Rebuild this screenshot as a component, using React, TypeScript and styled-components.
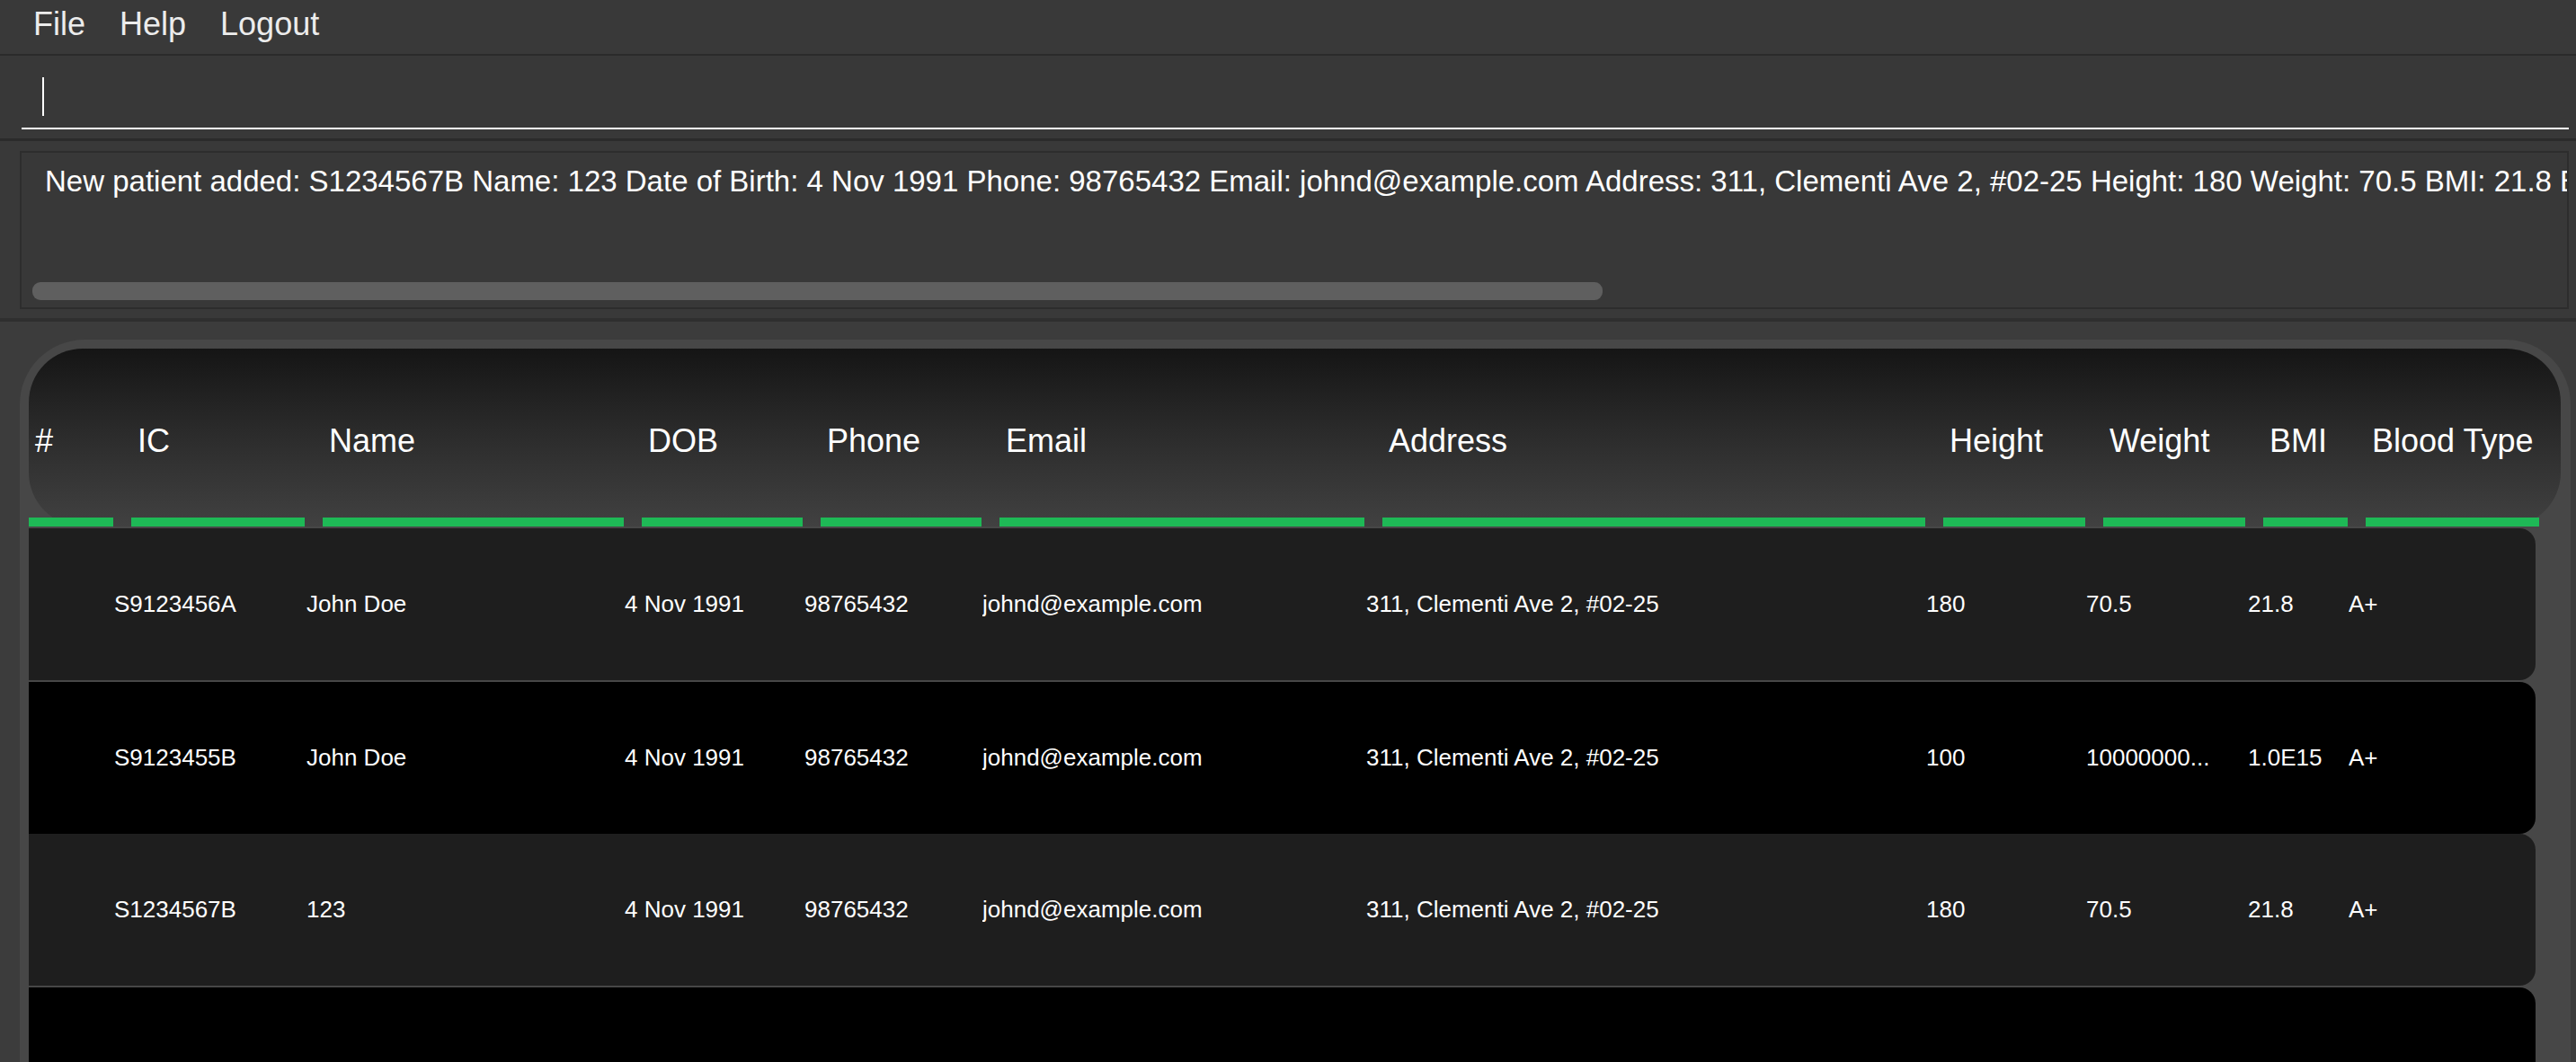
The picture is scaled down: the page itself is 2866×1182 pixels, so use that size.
import React from "react";
import styled, { createGlobalStyle } from "styled-components";

const GlobalStyle = createGlobalStyle`
  html, body {
    margin: 0;
    padding: 0;
    background: #3a3a3a;
  }
  body {
    width: 2866px;
    height: 1182px;
    overflow: hidden;
    font-family: "Liberation Sans", Arial, sans-serif;
  }
`;

const Window = styled.div`
  width: 2866px;
  height: 1182px;
  display: flex;
  flex-direction: column;
  background: #3a3a3a;
  overflow: hidden;
`;

const MenuBar = styled.div`
  flex: none;
  height: 60px;
  display: flex;
  align-items: flex-start;
  padding-left: 18px;
  background: #393939;
  border-bottom: 2px solid #2b2b2b;
`;

const MenuItem = styled.div`
  padding: 6px 19px 0;
  font-size: 36px;
  line-height: 41px;
  color: #ececec;
`;

const CommandSection = styled.div`
  flex: none;
  height: 92px;
  display: flex;
  padding: 0 8px 0 24px;
  background: #383838;
  border-bottom: 3px solid #2b2b2b;
`;

const CommandField = styled.div`
  flex: 1;
  height: 80px;
  display: flex;
  align-items: flex-start;
  border-bottom: 2px solid #ffffff;
`;

const Caret = styled.div`
  width: 2px;
  height: 43px;
  margin: 24px 0 0 23px;
  background: #ffffff;
`;

const ResultSection = styled.div`
  flex: none;
  height: 201px;
  box-sizing: border-box;
  padding: 11px 8px 10px 22px;
  display: flex;
  background: #393939;
  border-bottom: 4px solid #2f2f2f;
`;

const ResultBox = styled.div`
  flex: 1;
  display: flex;
  flex-direction: column;
  overflow: hidden;
  background: #383838;
  border: 2px solid #2d2d2d;
`;

const ResultText = styled.div`
  padding: 13px 0 0 26px;
  font-size: 33px;
  line-height: 37px;
  color: #ffffff;
  white-space: nowrap;
`;

const ScrollThumb = styled.div`
  width: 1747px;
  height: 20px;
  margin: auto 0 8px 12px;
  border-radius: 9px;
  background: #5f5f5f;
`;

const ListSection = styled.div`
  flex: 1;
  min-height: 0;
  display: flex;
  padding: 20px 6px 0 22px;
  background: #3c3c3c;
`;

const ListPanel = styled.div`
  flex: 1;
  display: flex;
  flex-direction: column;
  padding: 10px 11px 0 10px;
  background: #474747;
  border-radius: 72px 72px 0 0;
  overflow: hidden;
`;

const headerCols = "114px 213px 355px 199px 199px 426px 624px 178px 178px 114px 213px";
const rowCols = "95px 214px 354px 200px 198px 427px 623px 178px 180px 112px 1fr";

const Header = styled.div`
  flex: none;
  height: 198px;
  display: grid;
  grid-template-columns: ${headerCols};
  border-radius: 60px;
  background: linear-gradient(180deg, #151515 0%, #2a2a2a 45%, #414141 100%);
`;

const HeaderCell = styled.div`
  display: flex;
  flex-direction: column;
`;

const HeaderLabel = styled.div`
  flex: 1;
  display: flex;
  align-items: center;
  padding: 18px 0 0 7px;
  font-size: 36px;
  color: #ffffff;
  white-space: nowrap;
`;

const HeaderBar = styled.div`
  height: 10px;
  margin-right: 20px;
  background: #1eb956;
`;

const Rows = styled.div`
  display: flex;
  flex-direction: column;
  margin-top: 2px;
  padding-right: 28px;
`;

const Row = styled.div<{ $dark: boolean }>`
  flex: none;
  height: 169px;
  display: grid;
  grid-template-columns: ${rowCols};
  align-items: center;
  margin-bottom: ${(p) => (p.$dark ? "0" : "2px")};
  border-radius: 0 18px 18px 0;
  background: ${(p) => (p.$dark ? "#000000" : "#1e1e1e")};
`;

const Cell = styled.div`
  font-size: 26px;
  color: #ffffff;
  white-space: nowrap;
  overflow: hidden;
`;

const headers = ["#", "IC", "Name", "DOB", "Phone", "Email", "Address", "Height", "Weight", "BMI", "Blood Type"];

const patients = [
  ["", "S9123456A", "John Doe", "4 Nov 1991", "98765432", "johnd@example.com", "311, Clementi Ave 2, #02-25", "180", "70.5", "21.8", "A+"],
  ["", "S9123455B", "John Doe", "4 Nov 1991", "98765432", "johnd@example.com", "311, Clementi Ave 2, #02-25", "100", "10000000...", "1.0E15", "A+"],
  ["", "S1234567B", "123", "4 Nov 1991", "98765432", "johnd@example.com", "311, Clementi Ave 2, #02-25", "180", "70.5", "21.8", "A+"],
  ["", "", "", "", "", "", "", "", "", "", ""],
];

export default function App() {
  return (
    <>
      <GlobalStyle />
      <Window>
        <MenuBar>
          <MenuItem>File</MenuItem>
          <MenuItem>Help</MenuItem>
          <MenuItem>Logout</MenuItem>
        </MenuBar>
        <CommandSection>
          <CommandField>
            <Caret />
          </CommandField>
        </CommandSection>
        <ResultSection>
          <ResultBox>
            <ResultText>
              New patient added: S1234567B Name: 123 Date of Birth: 4 Nov 1991 Phone: 98765432 Email: johnd@example.com Address: 311, Clementi Ave 2, #02-25 Height: 180 Weight: 70.5 BMI: 21.8 Blood Type: A+
            </ResultText>
            <ScrollThumb />
          </ResultBox>
        </ResultSection>
        <ListSection>
          <ListPanel>
            <Header>
              {headers.map((h) => (
                <HeaderCell key={h}>
                  <HeaderLabel>{h}</HeaderLabel>
                  <HeaderBar />
                </HeaderCell>
              ))}
            </Header>
            <Rows>
              {patients.map((p, i) => (
                <Row key={i} $dark={i % 2 === 1}>
                  {p.map((v, j) => (
                    <Cell key={j}>{v}</Cell>
                  ))}
                </Row>
              ))}
            </Rows>
          </ListPanel>
        </ListSection>
      </Window>
    </>
  );
}
